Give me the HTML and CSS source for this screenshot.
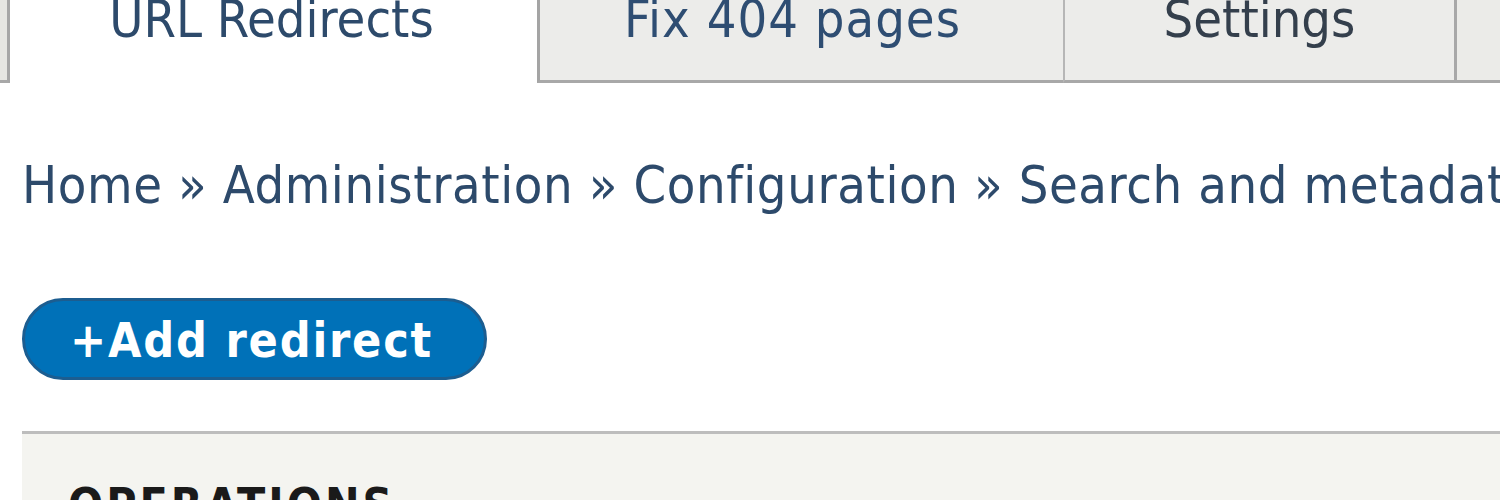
FILE: index.html
```html
<!DOCTYPE html>
<html lang="en">
<head>
<meta charset="utf-8">
<title>URL Redirects</title>
<link rel="stylesheet" href="styles.css">
</head>
<body>
<nav class="tabs">
  <a class="tab tab--edge" href="#"></a>
  <a class="tab tab--active" href="#">URL Redirects</a>
  <a class="tab tab--fix" href="#">Fix 404 pages</a>
  <a class="tab tab--settings" href="#">Settings</a>
  <a class="tab tab--rest" href="#"></a>
</nav>
<main class="content">
  <div class="breadcrumb">
    <a href="#">Home</a> » <a href="#">Administration</a> » <a href="#">Configuration</a> » <a href="#">Search and metadata</a> » <a href="#">URL redirects</a>
  </div>
  <div class="actions">
    <a class="button" href="#">+Add redirect</a>
  </div>
  <table class="table">
    <thead>
      <tr><th class="table__th">Operations</th></tr>
    </thead>
  </table>
</main>
</body>
</html>
```
FILE: styles.css
```css
html, body {
  margin: 0;
  padding: 0;
  overflow: hidden;
  background: #ffffff;
}
body {
  font-family: "DejaVu Sans Condensed", "DejaVu Sans", sans-serif;
  font-stretch: condensed;
  width: 1500px;
}
.tabs {
  display: flex;
  margin-top: -11px;
  white-space: nowrap;
}
.tab {
  display: block;
  box-sizing: border-box;
  font-size: 52px;
  line-height: 60px;
  height: 94px;
  padding: 0 0 31px;
  text-align: center;
  text-decoration: none;
  color: #2d4a6b;
  background: #ececea;
  border-bottom: 3px solid #a8a8a8;
}
.tab--edge {
  flex: 0 0 10px;
  background: #e6e6e2;
  border-right: 3px solid #a6a6a6;
}
.tab--active {
  flex: 0 0 527px;
  background: #ffffff;
  border-bottom: 0;
  padding-right: 4px;
}
.tab--fix {
  flex: 0 0 526px;
  border-left: 3px solid #a4a4a4;
  padding-right: 18px;
  letter-spacing: 1px;
  color: #2e4d72;
}
.tab--settings {
  flex: 0 0 391px;
  border-left: 2px solid #b6b6b6;
  color: #343f4c;
}
.tab--rest {
  flex: 1 0 auto;
  border-left: 3px solid #a8a8a8;
  background: #ebebe8;
}
.content {
  padding-left: 22px;
}
.breadcrumb {
  margin-top: 72px;
  font-size: 52px;
  line-height: 60px;
  letter-spacing: 0.6px;
  white-space: nowrap;
  color: #2d4a6b;
}
.breadcrumb a {
  color: #2d4a6b;
  text-decoration: none;
}
.actions {
  margin-top: 83px;
  display: flex;
}
.button {
  display: block;
  box-sizing: border-box;
  height: 82px;
  width: 465px;
  padding: 11px 0 0 45px;
  font-size: 48px;
  line-height: 56px;
  font-weight: bold;
  letter-spacing: 1.8px;
  color: #ffffff;
  text-decoration: none;
  background: #0071b8;
  border: 3px solid #1c5d90;
  border-radius: 999px;
  white-space: nowrap;
}
.table {
  margin-top: 51px;
  width: 1478px;
  border-collapse: collapse;
  border-top: 3px solid #bdbdbd;
  background: #f4f4f0;
}
.table__th {
  text-align: left;
  padding: 44px 0 20px 46px;
  font-size: 46px;
  line-height: 54px;
  font-weight: bold;
  text-transform: uppercase;
  letter-spacing: 3px;
  color: #1a1a1a;
}
```
